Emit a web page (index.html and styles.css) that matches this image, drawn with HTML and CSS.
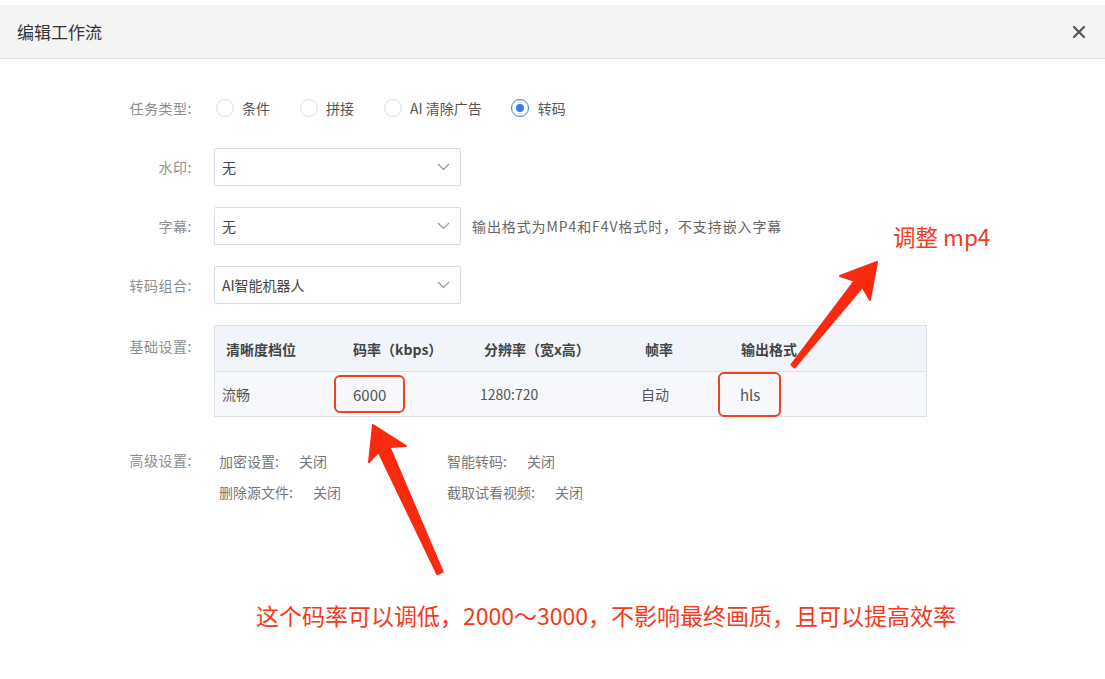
FILE: index.html
```html
<!DOCTYPE html>
<html lang="zh-CN">
<head>
<meta charset="utf-8">
<title>编辑工作流</title>
<link rel="stylesheet" href="styles.css">
</head>
<body>
<div class="dialog">
  <div class="header">
    <span class="title">编辑工作流</span>
    <svg class="close" width="14" height="14" viewBox="0 0 14 14"><path d="M2 2 L12 12 M12 2 L2 12" stroke="#555" stroke-width="2.2" stroke-linecap="round" fill="none"/></svg>
  </div>
  <div class="form">
    <div class="row">
      <div class="label">任务类型:</div>
      <div class="radios">
        <label class="radio"><span class="dot"></span>条件</label>
        <label class="radio"><span class="dot"></span>拼接</label>
        <label class="radio"><span class="dot"></span>AI 清除广告</label>
        <label class="radio checked"><span class="dot"></span>转码</label>
      </div>
    </div>
    <div class="row">
      <div class="label">水印:</div>
      <div class="select"><span>无</span><svg class="chev" width="13" height="8" viewBox="0 0 13 8"><path d="M1 1 L6.5 6.5 L12 1" stroke="#8b98aa" stroke-width="1.2" fill="none"/></svg></div>
    </div>
    <div class="row">
      <div class="label">字幕:</div>
      <div class="select"><span>无</span><svg class="chev" width="13" height="8" viewBox="0 0 13 8"><path d="M1 1 L6.5 6.5 L12 1" stroke="#8b98aa" stroke-width="1.2" fill="none"/></svg></div>
      <div class="hint">输出格式为MP4和F4V格式时，不支持嵌入字幕</div>
    </div>
    <div class="row">
      <div class="label">转码组合:</div>
      <div class="select"><span>AI智能机器人</span><svg class="chev" width="13" height="8" viewBox="0 0 13 8"><path d="M1 1 L6.5 6.5 L12 1" stroke="#8b98aa" stroke-width="1.2" fill="none"/></svg></div>
    </div>
    <div class="row top">
      <div class="label label-table">基础设置:</div>
      <div class="table">
        <div class="th">清晰度档位</div>
        <div class="th">码率（kbps）</div>
        <div class="th">分辨率（宽x高）</div>
        <div class="th">帧率</div>
        <div class="th">输出格式</div>
        <div class="td">流畅</div>
        <div class="td"><span class="mark mark-rate">6000</span></div>
        <div class="td">1280:720</div>
        <div class="td">自动</div>
        <div class="td"><span class="mark mark-fmt">hls</span></div>
      </div>
    </div>
    <div class="row top adv">
      <div class="label">高级设置:</div>
      <div class="adv-grid">
        <div class="adv-item">加密设置:<span class="val">关闭</span></div>
        <div class="adv-item">智能转码:<span class="val">关闭</span></div>
        <div class="adv-item">删除源文件:<span class="val">关闭</span></div>
        <div class="adv-item">截取试看视频:<span class="val">关闭</span></div>
      </div>
    </div>
    <div class="note">这个码率可以调低，2000～3000，不影响最终画质，且可以提高效率</div>
  </div>
</div>
<div class="note-top">调整 mp4</div>
<svg class="arrows" width="1105" height="679" viewBox="0 0 1105 679">
  <polygon points="791.5,364.5 854.6,280.8 840,276 877,262 870,300 862.4,287 794.5,367.5" fill="#fa2a10" stroke="#fa2a10" stroke-width="2" stroke-linejoin="round"/>
  <polygon points="442.7,571.8 389.6,447.1 406,446 373,425 369,462 378.6,452.1 437.3,574.2" fill="#fa2a10" stroke="#fa2a10" stroke-width="2" stroke-linejoin="round"/>
</svg>
</body>
</html>
```
FILE: styles.css
```css
html, body {
  margin: 0;
  padding: 0;
}
body {
  width: 1105px;
  height: 679px;
  overflow: hidden;
  position: relative;
  background: #fff;
  font-family: "Noto Sans CJK SC", "Noto Sans", sans-serif;
  color: #555;
  font-size: 14px;
}
.dialog {
  padding-top: 5px;
}
.header {
  height: 53px;
  background: #f4f4f5;
  border-bottom: 1px solid #dfe5ec;
  display: flex;
  align-items: center;
  justify-content: space-between;
  padding: 0 19px 0 17px;
}
.title {
  font-size: 17px;
  color: #333;
}
.form {
  padding-top: 30px;
  display: flex;
  flex-direction: column;
}
.row {
  display: flex;
  align-items: center;
  height: 38px;
  margin-bottom: 21px;
}
.row.top {
  align-items: flex-start;
  height: auto;
}
.label {
  width: 192px;
  flex: none;
  margin-right: 22px;
  text-align: right;
  color: #8e8e8e;
  font-size: 14px;
  letter-spacing: 0.5px;
}
.radios {
  display: flex;
  align-items: center;
  margin-left: 2px;
}
.radio {
  display: flex;
  align-items: center;
  margin-right: 30px;
  color: #555;
}
.dot {
  width: 16px;
  height: 16px;
  border: 1px solid #dadee4;
  border-radius: 50%;
  margin-right: 8px;
  box-sizing: content-box;
  display: flex;
  align-items: center;
  justify-content: center;
}
.radio.checked .dot {
  width: 16px;
  height: 16px;
  border: 1.5px solid #3a7df2;
  margin: -0.5px 8.5px 0 -0.5px;
}
.radio.checked .dot::after {
  content: "";
  width: 8px;
  height: 8px;
  border-radius: 50%;
  background: #3a7df2;
}
.select {
  width: 247px;
  height: 38px;
  box-sizing: border-box;
  border: 1px solid #d5dce6;
  border-radius: 2px;
  display: flex;
  align-items: center;
  justify-content: space-between;
  padding: 0 10px 0 7px;
  color: #444;
}
.hint {
  margin-left: 11px;
  color: #666;
  font-size: 14px;
  letter-spacing: 0.9px;
}
.label-table {
  padding-top: 11px;
}
.table {
  width: 713px;
  box-sizing: border-box;
  border: 1px solid #dbe1e8;
  display: grid;
  grid-template-columns: 127px 131px 161px 96px 1fr;
  grid-template-rows: 46px 44px;
  background: #f6f8fb;
}
.th {
  background: #f1f4f8;
  border-bottom: 1px solid #dbe1e8;
  display: flex;
  align-items: center;
  padding-left: 11px;
  font-weight: bold;
  color: #444;
}
.td {
  display: flex;
  align-items: center;
  padding-left: 7px;
  color: #555;
}
.mark {
  border: 2.5px solid #f2411f;
  border-radius: 6px;
  display: flex;
  align-items: center;
  box-sizing: border-box;
}
.mark-rate {
  height: 38px;
  margin-left: -15px;
  padding: 0 17px 0 17px;
  font-size: 15px;
}
.mark-fmt {
  height: 45px;
  margin-left: -19px;
  padding: 0 19px 0 20px;
  font-size: 15px;
}
.adv {
  margin-top: 7px;
}
.adv .label {
  line-height: 30px;
}
.adv-grid {
  display: grid;
  grid-template-columns: 228px 200px;
  grid-auto-rows: 31px;
  margin-left: 5px;
  align-items: center;
  color: #777;
}
.adv-item {
  white-space: nowrap;
}
.val {
  margin-left: 20px;
}
.note {
  margin-top: 70px;
  margin-left: 256px;
  color: #f43a20;
  font-size: 23px;
}
.note-top {
  position: absolute;
  left: 893px;
  top: 220px;
  color: #f43a20;
  font-size: 22.5px;
}
.arrows {
  position: absolute;
  left: 0;
  top: 0;
  pointer-events: none;
}
```
